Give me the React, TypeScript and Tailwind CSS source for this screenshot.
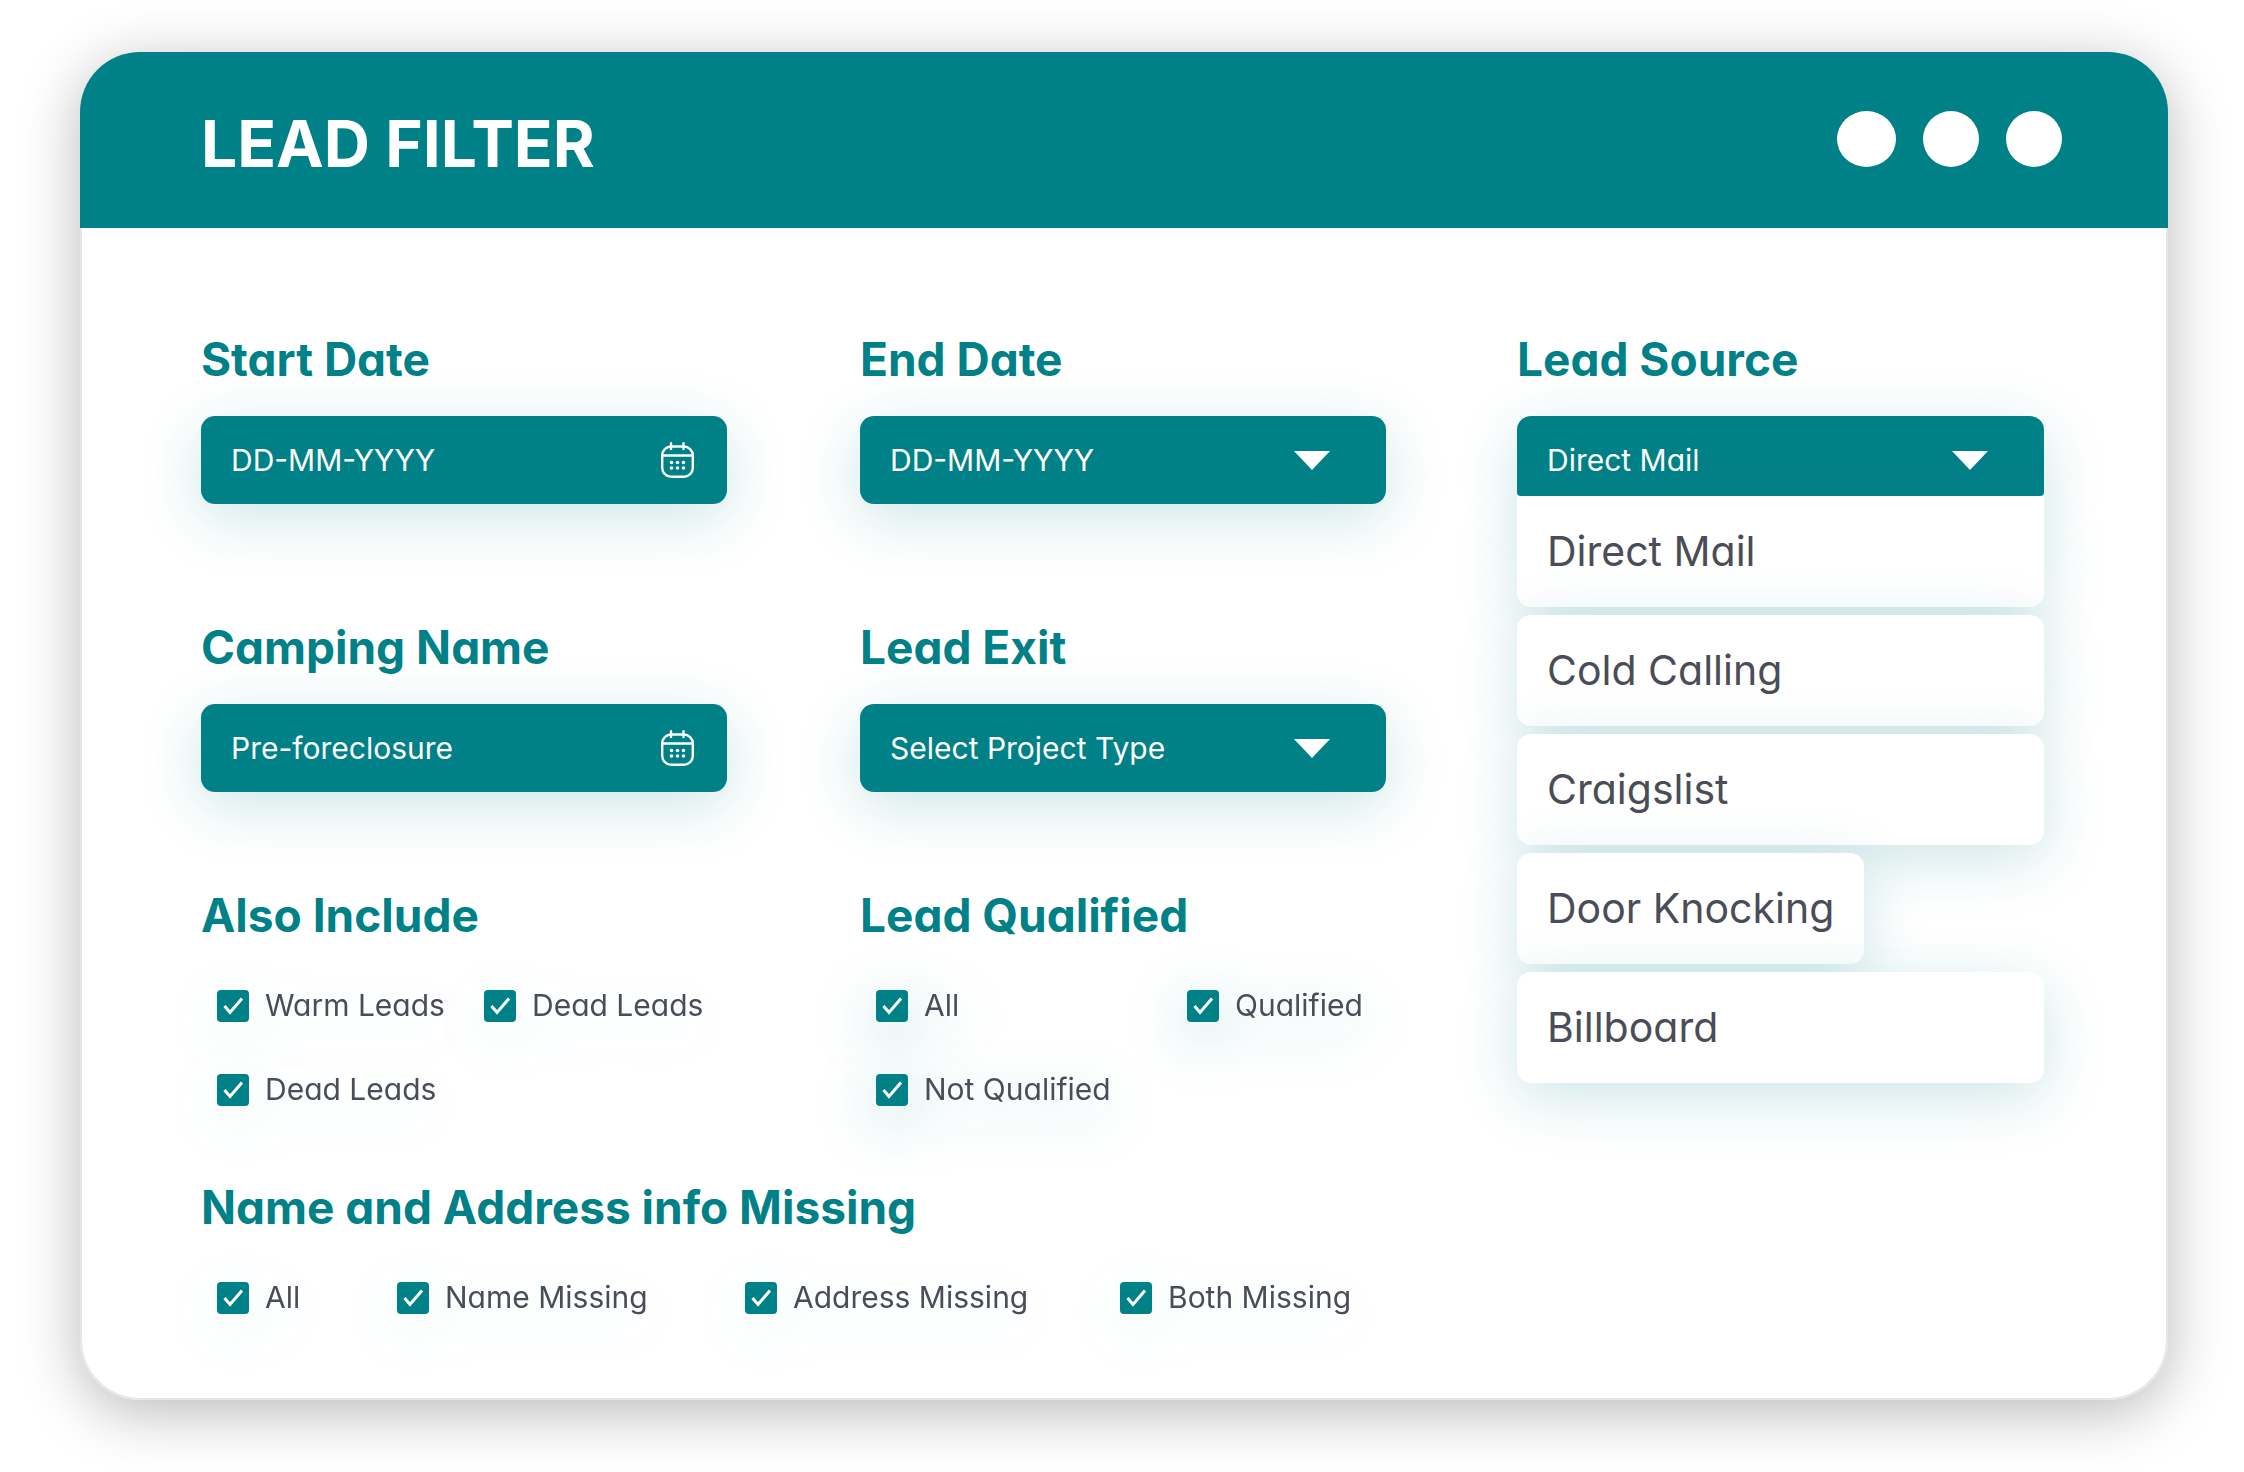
import { useId, useState } from 'react';
import type { ReactNode } from 'react';
import clsx from 'clsx';

type CheckOption = {
  label: string;
  soft?: boolean;
};

type SourceOption = {
  label: string;
  compact?: boolean;
};

const SOURCES: SourceOption[] = [
  { label: 'Direct Mail' },
  { label: 'Cold Calling' },
  { label: 'Craigslist' },
  { label: 'Door Knocking', compact: true },
  { label: 'Billboard' },
];

const ALSO_INCLUDE: CheckOption[] = [{ label: 'Warm Leads' }, { label: 'Dead Leads' }, { label: 'Dead Leads' }];

const QUALIFIED: CheckOption[] = [
  { label: 'All', soft: true },
  { label: 'Qualified', soft: true },
  { label: 'Not Qualified', soft: true },
];

const MISSING: CheckOption[] = [
  { label: 'All' },
  { label: 'Name Missing' },
  { label: 'Address Missing' },
  { label: 'Both Missing' },
];

const HEADING = 'block text-[46px] leading-[56px] font-bold text-[#008087]';
const CONTROL = 'w-full bg-[#008087] pl-[30px] text-[30px] leading-[40px] text-white placeholder:text-white outline-none';
const GLOW = 'shadow-[0_14px_60px_rgba(0,128,136,0.2)]';

function CalendarIcon() {
  return (
    <svg viewBox="0 0 33 36" className="h-9 w-[33px]" fill="none" stroke="currentColor" strokeWidth="2.4" strokeLinecap="round">
      <rect x="1.2" y="4.5" width="30.6" height="30.3" rx="9" />
      <path d="M1.2 13.5h30.600M10 1.200v5.800M22.500 1.200v5.800" />
      <g fill="currentColor" stroke="none">
        <circle cx="10.5" cy="20.5" r="1.8" />
        <circle cx="16.5" cy="20.5" r="1.8" />
        <circle cx="22.5" cy="20.5" r="1.8" />
        <circle cx="10.5" cy="26" r="1.8" />
        <circle cx="16.5" cy="26" r="1.8" />
        <circle cx="22.5" cy="26" r="1.8" />
      </g>
    </svg>
  );
}

function Caret() {
  return (
    <svg viewBox="0 0 36 19" className="h-[19px] w-9" fill="currentColor">
      <path d="M0 0h36L18 19z" />
    </svg>
  );
}

function DateField({ label, placeholder }: { label: string; placeholder: string }) {
  const id = useId();
  return (
    <div>
      <label htmlFor={id} className={HEADING}>
        {label}
      </label>
      <div className="relative mt-[29px]">
        <input id={id} type="text" placeholder={placeholder} className={clsx(CONTROL, GLOW, 'block h-[88px] rounded-[14px] pr-20')} />
        <span className="pointer-events-none absolute inset-y-0 right-[33px] flex items-center text-white">
          <CalendarIcon />
        </span>
      </div>
    </div>
  );
}

function SelectField({ label, value }: { label: string; value: string }) {
  const id = useId();
  return (
    <div>
      <label htmlFor={id} className={HEADING}>
        {label}
      </label>
      <div className="relative mt-[29px]">
        <select id={id} className={clsx(CONTROL, GLOW, 'block h-[88px] appearance-none rounded-[14px] pr-28')}>
          <option>{value}</option>
        </select>
        <span className="pointer-events-none absolute inset-y-0 right-14 flex items-center text-white">
          <Caret />
        </span>
      </div>
    </div>
  );
}

function CheckItem({ label, soft }: CheckOption) {
  return (
    <label
      className={clsx(
        'flex h-8 items-center gap-4 whitespace-nowrap text-[30px] leading-8 text-[#4a4d57]',
        soft ? 'drop-shadow-[0_14px_28px_rgba(0,128,136,0.3)]' : 'drop-shadow-[0_14px_28px_rgba(0,128,136,0.08)]',
      )}
    >
      <span className="grid size-8 shrink-0">
        <input
          type="checkbox"
          defaultChecked
          className="peer col-start-1 row-start-1 size-8 appearance-none rounded border-2 border-[#008087] checked:bg-[#008087]"
        />
        <svg
          viewBox="0 0 32 32"
          className="pointer-events-none invisible col-start-1 row-start-1 size-8 text-white peer-checked:visible"
          fill="none"
          stroke="currentColor"
          strokeWidth="3"
        >
          <path d="M7.5 16l5.500 6.500L25 8.500" />
        </svg>
      </span>
      <span className="pb-0.5">{label}</span>
    </label>
  );
}

function CheckGroup({ title, options, columns }: { title: string; options: CheckOption[]; columns: string }) {
  return (
    <fieldset>
      <legend className={HEADING}>{title}</legend>
      <div className={clsx('mt-[47px] grid gap-y-[52px] pl-4', columns)}>
        {options.map((option, index) => (
          <CheckItem key={index} {...option} />
        ))}
      </div>
    </fieldset>
  );
}

function SourceMenu() {
  const id = useId();
  const [selected, setSelected] = useState('Direct Mail');
  return (
    <div>
      <span id={id} className={HEADING}>
        Lead Source
      </span>
      <button
        type="button"
        aria-haspopup="listbox"
        aria-expanded="true"
        aria-labelledby={id}
        className={clsx(CONTROL, GLOW, 'mt-[29px] flex h-20 items-center justify-between rounded-t-[14px] rounded-b pt-2 pr-14 text-left')}
      >
        {selected}
        <Caret />
      </button>
      <ul role="listbox" aria-labelledby={id} className="flex flex-col items-start gap-2">
        {SOURCES.map((source, index) => (
          <li
            key={source.label}
            role="option"
            aria-selected={source.label === selected}
            onClick={() => setSelected(source.label)}
            className={clsx(
              'flex h-[111px] cursor-pointer items-center bg-white px-[30px] pb-0.5 text-[41px] leading-[52px] whitespace-nowrap text-[#4a4d57]',
              GLOW,
              index === 0 ? 'rounded-b-[14px]' : 'rounded-[14px]',
              !source.compact && 'w-full',
            )}
          >
            {source.label}
          </li>
        ))}
      </ul>
    </div>
  );
}

function Row({ className, children }: { className?: string; children: ReactNode }) {
  return <div className={clsx('grid grid-cols-2 gap-x-[133px]', className)}>{children}</div>;
}

export default function App() {
  return (
    <main className="min-h-screen bg-white pt-[52px] pr-[76px] pb-[72px] pl-20 font-['Inter',sans-serif] [font-feature-settings:'cv11']">
      <form className="rounded-[60px] shadow-[0_12px_60px_rgba(0,0,0,0.28)]">
        <header className="flex h-44 items-center justify-between rounded-t-[60px] bg-[#008087] pr-[106px] pl-[121px] text-white">
          <h1 className="pt-2 text-[64px] leading-[80px] font-bold">LEAD FILTER</h1>
          <div className="flex gap-[27px] pb-0.5">
            <span className="h-14 w-[59px] rounded-[50%] bg-white" />
            <span className="size-14 rounded-full bg-white" />
            <span className="size-14 rounded-full bg-white" />
          </div>
        </header>

        <div className="grid grid-cols-3 gap-x-[131px] rounded-b-[60px] border-x-2 border-b-2 border-[#e6e6e6] bg-white pt-[103px] pr-[122px] pb-[84px] pl-[119px]">
          <div className="col-span-2">
            <Row>
              <DateField label="Start Date" placeholder="DD-MM-YYYY" />
              <SelectField label="End Date" value="DD-MM-YYYY" />
            </Row>
            <Row className="mt-[115px]">
              <DateField label="Camping Name" placeholder="Pre-foreclosure" />
              <SelectField label="Lead Exit" value="Select Project Type" />
            </Row>
            <Row className="mt-[95px]">
              <CheckGroup title="Also Include" options={ALSO_INCLUDE} columns="grid-cols-[267px_auto]" />
              <CheckGroup title="Lead Qualified" options={QUALIFIED} columns="grid-cols-[311px_auto]" />
            </Row>
            <div className="mt-[73px]">
              <CheckGroup
                title="Name and Address info Missing"
                options={MISSING}
                columns="grid-cols-[180px_348px_375px_auto]"
              />
            </div>
          </div>
          <SourceMenu />
        </div>
      </form>
    </main>
  );
}
